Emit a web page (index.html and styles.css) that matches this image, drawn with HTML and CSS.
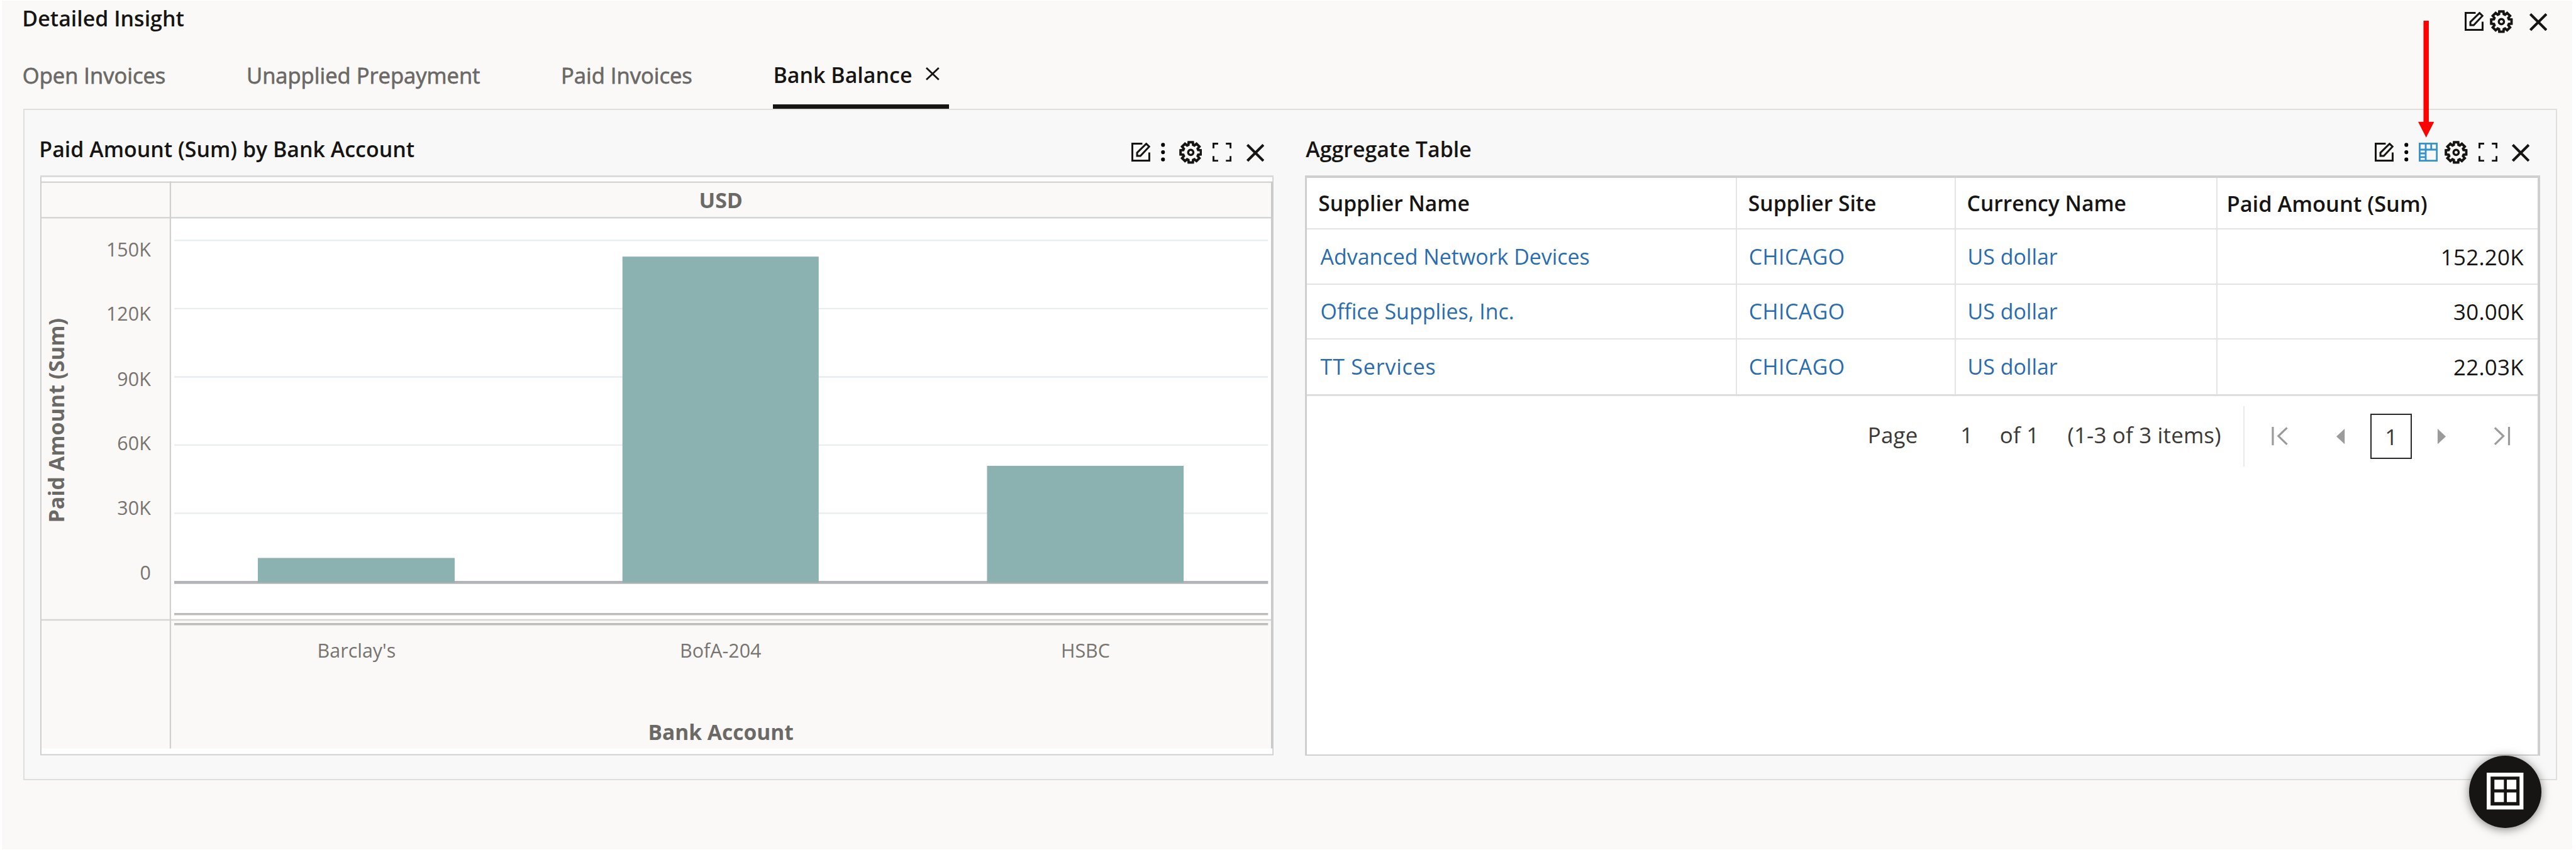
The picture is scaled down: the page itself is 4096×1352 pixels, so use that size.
FILE: index.html
```html
<!DOCTYPE html>
<html lang="en">
<head>
<meta charset="utf-8">
<title>Detailed Insight</title>
<link rel="stylesheet" href="styles.css">
</head>
<body>
<svg class="sprite" aria-hidden="true">
  <symbol id="edit" viewBox="0 0 32 32">
    <path d="M18.5 1.6H1.6V30.2H30.2V16.5M25 1.8L30 6.6 15.2 22.2H9.6V16.8Z" fill="none" stroke="currentColor" stroke-width="3.2"/>
  </symbol>
  <symbol id="gear" viewBox="-19.5 -19.5 39 39">
    <path d="M12.6 -4L17.2 -3.5V3.5L12.6 4 11.7 6.1 14.6 9.7 9.7 14.6 6.1 11.7 4 12.6 3.5 17.2H-3.5L-4 12.6 -6.1 11.7 -9.7 14.6 -14.6 9.7 -11.7 6.1 -12.6 4 -17.2 3.5V-3.5L-12.6 -4 -11.7 -6.1 -14.6 -9.7 -9.7 -14.6 -6.1 -11.7 -4 -12.6 -3.5 -17.2H3.5L4 -12.6 6.1 -11.7 9.7 -14.6 14.6 -9.7 11.7 -6.1Z" fill="none" stroke="currentColor" stroke-width="4.2"/>
    <circle r="4.4" fill="none" stroke="currentColor" stroke-width="3.6"/>
  </symbol>
  <symbol id="close" viewBox="0 0 30 30">
    <path d="M1.5 1.5L28.5 28.5M28.5 1.5L1.5 28.5" fill="none" stroke="currentColor" stroke-width="4.4"/>
  </symbol>
  <symbol id="dots" viewBox="0 0 7 32">
    <circle cx="3.5" cy="3.6" r="3.3"/><circle cx="3.5" cy="16" r="3.3"/><circle cx="3.5" cy="28.3" r="3.3"/>
  </symbol>
  <symbol id="expand" viewBox="0 0 32 32">
    <path d="M1.6 9.5V1.6H9.5M22.5 1.6H30.4V9.5M30.4 22.5V30.4H22.5M9.5 30.4H1.6V22.5" fill="none" stroke="currentColor" stroke-width="3.2"/>
  </symbol>
  <symbol id="table" viewBox="0 0 32 32">
    <path d="M1.5 1.5H30.5V30.5H1.5ZM1.5 11.7H30.5M11.7 1.5V30.5M21 1.5V11.7M1.5 18H11.7M1.5 24.2H11.7" fill="none" stroke="currentColor" stroke-width="3"/>
  </symbol>
</svg>

<main class="page">
  <header class="page-header">
    <h1 class="title">Detailed Insight</h1>
    <div class="tools">
      <svg class="icon"><use href="#edit"/></svg>
      <svg class="icon icon-gear near"><use href="#gear"/></svg>
      <svg class="icon icon-close"><use href="#close"/></svg>
    </div>
  </header>

  <nav class="tabs">
    <a class="tab">Open Invoices</a>
    <a class="tab">Unapplied Prepayment</a>
    <a class="tab">Paid Invoices</a>
    <a class="tab active">Bank Balance
      <svg class="tab-close" viewBox="0 0 23 22"><path d="M1 1L22 21M22 1L1 21" fill="none" stroke="currentColor" stroke-width="3"/></svg>
    </a>
  </nav>

  <section class="panel">
    <article class="card">
      <header class="card-header">
        <h2 class="title">Paid Amount (Sum) by Bank Account</h2>
        <div class="tools">
          <svg class="icon"><use href="#edit"/></svg>
          <svg class="icon icon-dots"><use href="#dots"/></svg>
          <svg class="icon icon-gear far"><use href="#gear"/></svg>
          <svg class="icon icon-expand"><use href="#expand"/></svg>
          <svg class="icon icon-close"><use href="#close"/></svg>
        </div>
      </header>
      <svg class="chart" viewBox="68 296 2080 979">
        <rect class="surface" x="68" y="296" width="2080" height="979"/>
        <rect class="band" x="70" y="307" width="2074" height="60"/>
        <rect class="band" x="70" y="367" width="217" height="896"/>
        <rect class="band" x="287" y="1047" width="1857" height="216"/>
        <path class="grid" d="M294 405.7H2139M294 520.7H2139M294 636H2139M294 751H2139M294 866H2139"/>
        <path class="zero" d="M294 982.8H2139"/>
        <rect class="bar" x="435" y="941.5" width="332" height="41.5"/>
        <rect class="bar" x="1050" y="433" width="331" height="550"/>
        <rect class="bar" x="1665" y="786" width="331.5" height="197"/>
        <path class="axis" d="M294 1036.2H2139M294 1053.2H2139"/>
        <path class="rule" d="M70 307.5H2147M70 367.3H2144M70 1046H2144"/>
        <path class="rule thin" d="M287.5 306V1263"/>
        <path class="edge" d="M2146 307V1263"/>
        <path class="frame" d="M69 296V1273.5H2147.5V296"/>
        <path class="frame top" d="M68 297.5H2148.5"/>
        <text class="heading" x="1216" y="351">USD</text>
        <text class="tick end" x="254.5" y="433.3">150K</text>
        <text class="tick end" x="254.5" y="541.3">120K</text>
        <text class="tick end" x="254.5" y="651.3">90K</text>
        <text class="tick end" x="254.5" y="759.3">60K</text>
        <text class="tick end" x="254.5" y="869.3">30K</text>
        <text class="tick end" x="254.5" y="978">0</text>
        <text class="heading" transform="translate(108.5 709.5) rotate(-90)">Paid Amount (Sum)</text>
        <text class="tick" x="601.5" y="1110">Barclay's</text>
        <text class="tick" x="1215.5" y="1110">BofA-204</text>
        <text class="tick" x="1831" y="1110">HSBC</text>
        <text class="heading narrow" x="1216" y="1248.5">Bank Account</text>
      </svg>
    </article>

    <article class="card">
      <header class="card-header wide">
        <h2 class="title">Aggregate Table</h2>
        <div class="tools">
          <svg class="icon"><use href="#edit"/></svg>
          <svg class="icon icon-dots"><use href="#dots"/></svg>
          <svg class="icon icon-table"><use href="#table"/></svg>
          <svg class="icon icon-gear near"><use href="#gear"/></svg>
          <svg class="icon icon-expand"><use href="#expand"/></svg>
          <svg class="icon icon-close"><use href="#close"/></svg>
        </div>
      </header>
      <div class="table-box">
        <div class="row head">
          <div class="cell">Supplier Name</div><div class="cell">Supplier Site</div><div class="cell">Currency Name</div><div class="cell wide-head">Paid Amount (Sum)</div>
        </div>
        <div class="row first">
          <div class="cell link">Advanced Network Devices</div><div class="cell link caps">CHICAGO</div><div class="cell link">US dollar</div><div class="cell num">152.20K</div>
        </div>
        <div class="row second">
          <div class="cell link">Office Supplies, Inc.</div><div class="cell link caps">CHICAGO</div><div class="cell link">US dollar</div><div class="cell num">30.00K</div>
        </div>
        <div class="row last">
          <div class="cell link spaced">TT Services</div><div class="cell link caps">CHICAGO</div><div class="cell link">US dollar</div><div class="cell num">22.03K</div>
        </div>
        <div class="pager">
          <span class="pager-text">Page</span>
          <span class="pager-text current">1</span>
          <span class="pager-text of">of 1</span>
          <span class="pager-text">(1-3 of 3 items)</span>
          <span class="pager-rule"></span>
          <svg class="nav-end" viewBox="0 0 28 31"><path d="M2 0V31M26 1.5L11.5 15.5 26 29.5" fill="none" stroke="currentColor" stroke-width="3.4"/></svg>
          <svg class="nav-step" viewBox="0 0 15 26"><path d="M14 0V26L0 13Z"/></svg>
          <span class="page-box">1</span>
          <svg class="nav-step" viewBox="0 0 15 26"><path d="M1 0V26L15 13Z"/></svg>
          <svg class="nav-end" viewBox="0 0 28 31"><path d="M26 0V31M2 1.5L16.5 15.5 2 29.5" fill="none" stroke="currentColor" stroke-width="3.4"/></svg>
        </div>
      </div>
    </article>
  </section>
</main>

<svg class="arrow" viewBox="0 0 27 197"><path d="M9 0H18V170.5H27L13.5 197 0 170.5H9Z"/></svg>
<button class="fab">
  <svg class="fab-icon" viewBox="0 0 62 62"><path d="M3.3 3.3H58.7V58.7H3.3Z" fill="none" stroke="currentColor" stroke-width="6.6"/><path d="M13 12H29V28H13ZM34 12H50V28H34ZM13 33.5H29V49.5H13ZM34 33.5H50V49.5H34Z"/></svg>
</button>
</body>
</html>
```
FILE: styles.css
```css
/* 1rem = 100 design units */
html { font-size: 94.27px; }
* { box-sizing: border-box; }
body {
  margin: 0;
  width: 4096px;
  height: 1352px;
  overflow: hidden;
  background: #fff;
  color: #161513;
  font-family: "Open Sans", "Noto Sans", sans-serif;
}
.sprite { display: none; }
.page {
  margin: .01rem .06rem 0 .03rem;
  height: 14.32rem;
  background: #fbf9f8;
}
.title {
  margin: 0;
  font-size: .36rem;
  line-height: .5rem;
  font-weight: 600;
  white-space: nowrap;
}
.tools { display: flex; align-items: center; }
.icon { display: block; flex: none; width: .32rem; height: .32rem; }
.icon-gear { width: .39rem; height: .39rem; }
.icon-gear.near { margin-left: .11rem; }
.icon-gear.far { margin-left: .23rem; }
.icon-dots { width: .07rem; margin-left: .18rem; }
.icon-table { margin-left: .175rem; color: #3593c9; }
.icon-expand { margin-left: .18rem; }
.icon-close { width: .3rem; height: .3rem; margin-left: .25rem; margin-top: .01rem; }

.page-header {
  display: flex;
  justify-content: space-between;
  align-items: center;
  height: .71rem;
  padding: 0 .43rem 0 .345rem;
}
.page-header .title { margin-bottom: .1rem; }
.page-header .icon-close { margin-left: .27rem; }

.tabs { display: flex; gap: 1.365rem; height: 1.12rem; padding-left: .35rem; }
.tab {
  display: flex;
  align-items: center;
  padding-top: .045rem;
  border-bottom: .08rem solid transparent;
  font-size: .3665rem;
  font-weight: 500;
  white-space: nowrap;
  color: #6b6966;
  -webkit-text-stroke: .008rem currentColor;
}
.tab.active {
  padding-right: .16rem;
  border-color: #161513;
  font-size: .36rem;
  font-weight: 600;
  color: #161513;
  -webkit-text-stroke: 0;
}
.tab-close { width: .23rem; height: .22rem; margin: 0 0 .04rem .23rem; }

.panel {
  display: grid;
  grid-template-columns: 20.8rem 20.83rem;
  column-gap: .54rem;
  width: 42.74rem;
  height: 11.32rem;
  margin-left: .36rem;
  padding-left: .265rem;
  border: 2px solid #dfdfde;
  background: #f8f8f8;
}
.card-header {
  display: flex;
  justify-content: space-between;
  align-items: center;
  height: 1.1rem;
  padding: .32rem .15rem 0 0;
}
.card-header.wide { padding-right: .175rem; }
.card-header .title { margin: 0 0 .1rem -.015rem; }
.card-header.wide .title { margin-left: .01rem; }

.chart { display: block; width: 20.8rem; height: 9.79rem; }
.surface { fill: #fff; }
.band { fill: #fbf9f8; }
.chart path { fill: none; }
.grid { stroke: #e8edf0; stroke-width: 2.5; }
.zero { stroke: #b3b4b7; stroke-width: 5; }
.axis { stroke: #bdbcba; stroke-width: 3.6; }
.bar { fill: #8bb1b0; }
.rule { stroke: #d6d6d5; stroke-width: 2.6; }
.rule.thin { stroke: #d0d0d1; stroke-width: 2.4; }
.edge { stroke: #c9c9ca; stroke-width: 4; }
.frame { stroke: #cfcfcf; stroke-width: 2.2; }
.frame.top { stroke: #d9d9d8; stroke-width: 3; }
.heading { fill: #6b6966; font-size: 36px; font-weight: 700; text-anchor: middle; }
.heading.narrow { font-size: 35.6px; }
.tick { fill: #77746f; font-size: 32.3px; text-anchor: middle; }
.tick.end { text-anchor: end; }

.table-box {
  height: 9.79rem;
  border: 3px solid #cfcfcf;
  border-width: 4px 4px 2px 3px;
  background: #fff;
}
.row {
  display: grid;
  grid-template-columns: 7.25rem 3.69rem 4.415rem 1fr;
  height: .935rem;
  border-bottom: 2px solid #e4e4e3;
  font-size: .36rem;
}
.row.head { height: .87rem; font-size: .357rem; font-weight: 600; }
.row.second { height: .915rem; }
.row.last { height: .955rem; border-bottom: 3px solid #dedede; }
.cell {
  display: flex;
  align-items: center;
  padding: 0 0 0 .19rem;
  border-right: 2px solid #e4e4e3;
  white-space: nowrap;
}
.cell:last-child { border-right: 0; }
.wide-head { padding-left: .155rem; font-size: .365rem; }
.link { padding-left: .225rem; color: #2a6cad; }
.link + .link { padding-left: .2rem; }
.spaced { letter-spacing: .009rem; }
.caps { letter-spacing: .005rem; }
.cell.num {
  justify-content: flex-end;
  padding-right: .235rem;
  font-size: .37rem;
  letter-spacing: .003rem;
}

.pager {
  display: flex;
  justify-content: flex-end;
  align-items: center;
  height: 1.34rem;
  padding: .03rem .46rem 0 0;
  font-size: .37rem;
  color: #9b9b9b;
}
.pager-text { margin-bottom: .055rem; color: #3b3936; white-space: nowrap; letter-spacing: .002rem; }
.current { margin-left: .72rem; }
.of { margin-left: .45rem; margin-right: .48rem; }
.pager-rule { width: 2px; height: 1.02rem; margin: 0 .46rem 0 .37rem; background: #e9e9e9; }
.nav-end { width: .28rem; height: .31rem; }
.nav-step { width: .15rem; height: .26rem; fill: currentColor; }
.nav-end + .nav-step { margin-left: .81rem; }
.nav-step + .nav-end { margin-left: .81rem; }
.page-box {
  display: flex;
  align-items: center;
  justify-content: center;
  width: .7rem;
  height: .76rem;
  margin: 0 .42rem 0 .43rem;
  border: 2px solid #2b2a28;
  color: #3b3936;
}

.arrow {
  position: absolute;
  left: 40.787rem;
  top: .353rem;
  width: .27rem;
  height: 1.97rem;
  fill: #f00;
}
.fab {
  position: absolute;
  left: 41.647rem;
  top: 12.75rem;
  display: flex;
  align-items: center;
  justify-content: center;
  width: 1.22rem;
  height: 1.22rem;
  padding: 0;
  border: 0;
  border-radius: 50%;
  background: #161513;
  color: #fff;
  box-shadow: 0 .02rem .16rem rgba(0, 0, 0, .5);
}
.fab-icon { width: .62rem; height: .62rem; margin-top: -.02rem; fill: currentColor; }
```
